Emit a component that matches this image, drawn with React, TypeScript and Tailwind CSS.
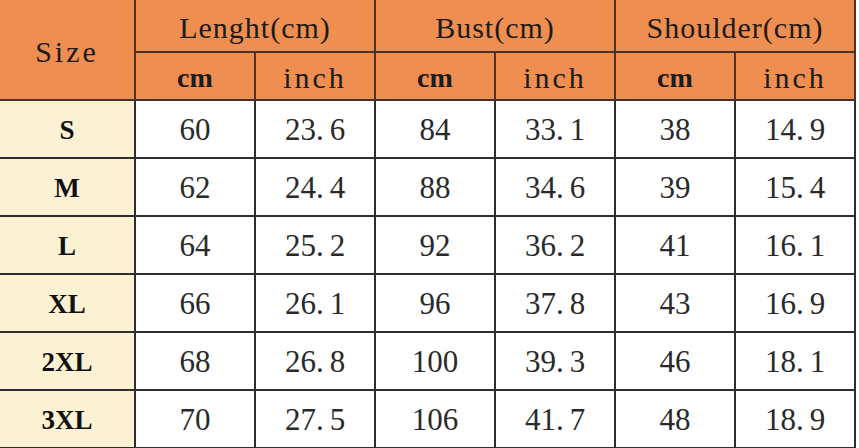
const rows = [
  { size: "S", v: ["60", "23.6", "84", "33.1", "38", "14.9"] },
  { size: "M", v: ["62", "24.4", "88", "34.6", "39", "15.4"] },
  { size: "L", v: ["64", "25.2", "92", "36.2", "41", "16.1"] },
  { size: "XL", v: ["66", "26.1", "96", "37.8", "43", "16.9"] },
  { size: "2XL", v: ["68", "26.8", "100", "39.3", "46", "18.1"] },
  { size: "3XL", v: ["70", "27.5", "106", "41.7", "48", "18.9"] },
];

function Num({ value }: { value: string }) {
  const [a, b] = value.split(".");
  if (b === undefined) return <span>{a}</span>;
  return (
    <span>
      {a}.<span className="ml-[6px]">{b}</span>
    </span>
  );
}

const head =
  "flex items-center justify-center pt-[3px] bg-[#ee8e50] border-r-2 border-b-2 border-[#4a3328] text-[#1e1a18]";
const cell =
  "flex items-center justify-center pt-[3px] border-r-2 border-b-2 border-[#2e2e2e]";

export default function App() {
  return (
    <div className="w-[859px] h-[448px] overflow-hidden bg-white">
      <div
        className="grid grid-cols-[136px_repeat(6,120px)] grid-rows-[53px_48px_repeat(6,58px)]"
        style={{ fontFamily: '"Liberation Serif", serif' }}
      >
        <div className={`${head} row-span-2 text-[30px] tracking-[3px]`}>Size</div>
        <div className={`${head} col-span-2 text-[30px] tracking-[1px]`}>Lenght(cm)</div>
        <div className={`${head} col-span-2 text-[30px] tracking-[1px]`}>Bust(cm)</div>
        <div className={`${head} col-span-2 text-[30px] tracking-[1px]`}>Shoulder(cm)</div>
        {[0, 1, 2].map((i) => (
          <div key={i} className="contents">
            <div className={`${head} text-[28px] font-bold`}>cm</div>
            <div className={`${head} text-[30px] tracking-[3px]`}>inch</div>
          </div>
        ))}
        {rows.map((r) => (
          <div key={r.size} className="contents">
            <div className={`${cell} bg-[#fdf1d4] text-[27px] font-bold text-[#111]`}>
              {r.size}
            </div>
            {r.v.map((x, j) => (
              <div key={j} className={`${cell} text-[31px] text-[#2a2a2a]`}>
                <Num value={x} />
              </div>
            ))}
          </div>
        ))}
      </div>
    </div>
  );
}
